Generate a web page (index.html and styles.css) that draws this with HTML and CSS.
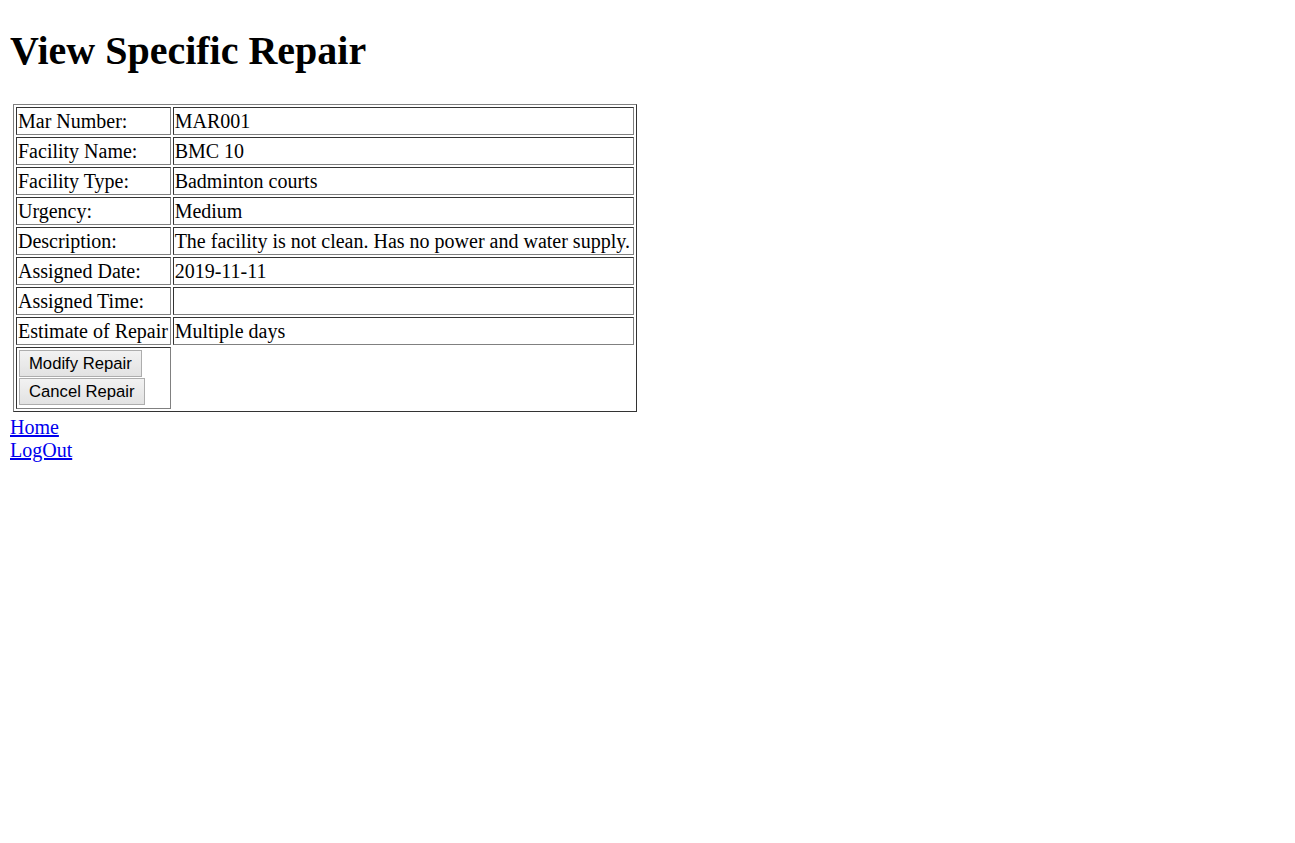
FILE: index.html
```html
<!DOCTYPE html>
<html>
<head>
<meta charset="utf-8">
<title>View Specific Repair</title>
<link rel="stylesheet" href="styles.css">
</head>
<body class="page">
<h1 class="title">View Specific Repair</h1>
<table class="details">
<tr><td class="label">Mar Number:</td><td class="value">MAR001</td></tr>
<tr><td class="label">Facility Name:</td><td class="value">BMC 10</td></tr>
<tr><td class="label">Facility Type:</td><td class="value">Badminton courts</td></tr>
<tr><td class="label">Urgency:</td><td class="value">Medium</td></tr>
<tr><td class="label">Description:</td><td class="value">The facility is not clean. Has no power and water supply.</td></tr>
<tr><td class="label">Assigned Date:</td><td class="value">2019-11-11</td></tr>
<tr><td class="label">Assigned Time:</td><td class="value"></td></tr>
<tr><td class="label">Estimate of Repair</td><td class="value">Multiple days</td></tr>
<tr><td class="label actions"><button class="btn">Modify Repair</button><button class="btn">Cancel Repair</button></td><td class="empty"></td></tr>
</table>
<a class="link" href="#">Home</a><br>
<a class="link" href="#">LogOut</a>
</body>
</html>
```
FILE: styles.css
```css
.page {
  margin: 10px;
  font-family: "Liberation Serif", "Times New Roman", serif;
  font-size: 20px;
  line-height: 23px;
  color: #000;
  background: #fff;
}
.title {
  font-size: 40px;
  font-weight: bold;
  line-height: 46px;
  margin: 18px 0 30px 0;
}
.details {
  margin: 0 0 4px 3px;
  border: 1px solid;
  border-color: #808080 #333 #333 #808080;
  border-spacing: 2px;
  width: 624px;
}
.details td {
  border: 1px solid;
  border-color: #333 #808080 #808080 #333;
  padding: 1px 1px;
  line-height: 24px;
  white-space: nowrap;
}
.details td.empty {
  border: none;
}
.details td.actions {
  line-height: 0;
  padding: 2px 1px 2px 1px;
}
.btn {
  display: block;
  font-family: "Liberation Sans", Arial, sans-serif;
  font-size: 16.67px;
  line-height: 19px;
  color: #000;
  padding: 3px 9px 3px 9px;
  margin: 0 0 1px 1px;
  border: 1px solid #adadad;
  border-radius: 0;
  background: linear-gradient(#f2f2f2, #e2e2e2);
}
.link {
  color: #0000ee;
  text-decoration: underline;
}
```
